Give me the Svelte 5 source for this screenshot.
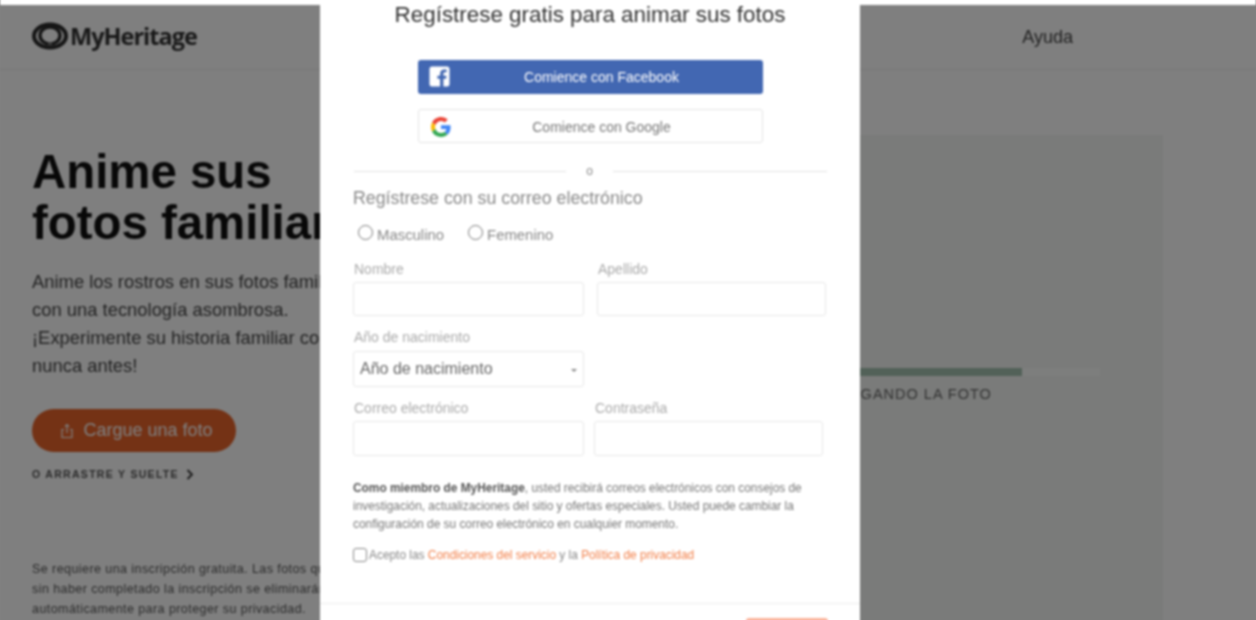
<script>
  let firstRow = [
    { label: "Nombre" },
    { label: "Apellido" }
  ];
  let lastRow = [
    { label: "Correo electrónico" },
    { label: "Contraseña" }
  ];
</script>

<div class="screen">
  <div class="canvas">
    <div class="page">
      <header class="topbar">
        <div class="logo">
          <svg width="38" height="28" viewBox="0 0 38 28" aria-hidden="true">
            <ellipse cx="19" cy="14" rx="16" ry="11.500" fill="none" stroke="#2c2c2c" stroke-width="4" />
            <ellipse cx="19" cy="13.500" rx="10" ry="8.500" fill="none" stroke="#2c2c2c" stroke-width="3.400" />
            <path d="M17 21.500h4" fill="none" stroke="#808080" stroke-width="2.500" />
          </svg>
          <span>MyHeritage</span>
        </div>
        <span class="help">Ayuda</span>
      </header>

      <main class="content">
        <section class="intro">
          <h1>Anime sus<br />fotos familiares</h1>
          <p class="lead">
            Anime los rostros en sus fotos familiares<br />
            con una tecnología asombrosa.<br />
            ¡Experimente su historia familiar como<br />
            nunca antes!
          </p>
          <button class="upload" type="button">
            <svg width="16" height="18" viewBox="0 0 16 18" aria-hidden="true">
              <path d="M5 7.500H3v8h10v-8h-2M8 11V2.500M5.800 4.600 8 2.500l2.200 2.100" fill="none" stroke="#fff" stroke-width="1.200" />
            </svg>
            Cargue una foto
          </button>
          <div class="drag">
            O ARRASTRE Y SUELTE
            <svg width="8" height="11" viewBox="0 0 8 11" aria-hidden="true">
              <path d="M1.500 1 6 5.500 1.500 10" fill="none" stroke="#333" stroke-width="1.800" />
            </svg>
          </div>
          <p class="fine">
            Se requiere una inscripción gratuita. Las fotos que<br />
            sin haber completado la inscripción se eliminarán<br />
            automáticamente para proteger su privacidad.
          </p>
        </section>

        <section class="preview">
          <div class="progress"><div class="progress-fill"></div></div>
          <div class="progress-label">CARGANDO LA FOTO</div>
        </section>
      </main>
    </div>

    <div class="overlay"></div>

    <div class="modal">
      <div class="modal-body">
        <h2>Regístrese gratis para animar sus fotos</h2>

        <button class="social fb" type="button">
          <svg class="social-icon" width="21" height="21" viewBox="0 0 21 21" aria-hidden="true">
            <path d="M3 .5h15A2.500 2.500 0 0 1 20.500 3v15a2.500 2.500 0 0 1-2.500 2.500h-3.600v-7.700h2.700l.4-3.100h-3.100V7.800c0-.9.300-1.500 1.600-1.500h1.600V3.500c-.3 0-1.300-.1-2.400-.1-2.400 0-4 1.400-4 4.100v2.200H8.400v3.100h2.700v7.700H3A2.500 2.500 0 0 1 .5 18V3A2.500 2.500 0 0 1 3 .5z" fill="#fff" />
          </svg>
          Comience con Facebook
        </button>

        <button class="social google" type="button">
          <svg class="social-icon" width="20" height="20" viewBox="0 0 48 48" aria-hidden="true">
            <path fill="#EA4335" d="M24 9.500c3.500 0 6.700 1.200 9.200 3.600l6.900-6.900C35.900 2.400 30.500 0 24 0 14.600 0 6.500 5.400 2.600 13.200l8 6.200C12.500 13.600 17.800 9.500 24 9.500z" />
            <path fill="#4285F4" d="M47 24.500c0-1.600-.1-3.100-.4-4.500H24v9h12.900c-.6 3-2.200 5.500-4.700 7.200l7.700 6c4.500-4.200 7.100-10.300 7.100-17.700z" />
            <path fill="#FBBC05" d="M10.500 28.600c-.5-1.400-.8-3-.8-4.600s.3-3.200.8-4.600l-8-6.200C.9 16.500 0 20.100 0 24s.9 7.500 2.600 10.800l7.900-6.200z" />
            <path fill="#34A853" d="M24 48c6.500 0 11.900-2.100 15.900-5.800l-7.700-6c-2.200 1.500-4.900 2.300-8.200 2.300-6.200 0-11.500-4.200-13.400-9.800l-8 6.200C6.500 42.600 14.600 48 24 48z" />
          </svg>
          Comience con Google
        </button>

        <div class="divider"><span>o</span></div>

        <h3>Regístrese con su correo electrónico</h3>

        <div class="genders">
          <label><span class="radio"></span>Masculino</label>
          <label><span class="radio"></span>Femenino</label>
        </div>

        <div class="row row-names">
          {#each firstRow as f}
            <div class="field">
              <span class="field-label">{f.label}</span>
              <div class="input"></div>
            </div>
          {/each}
        </div>

        <div class="row row-year">
          <div class="field">
            <span class="field-label">Año de nacimiento</span>
            <div class="input select">
              Año de nacimiento
              <span class="caret"></span>
            </div>
          </div>
        </div>

        <div class="row row-account">
          {#each lastRow as f}
            <div class="field">
              <span class="field-label">{f.label}</span>
              <div class="input"></div>
            </div>
          {/each}
        </div>

        <p class="terms">
          <b>Como miembro de MyHeritage</b>, usted recibirá correos electrónicos con consejos de<br />
          investigación, actualizaciones del sitio y ofertas especiales. Usted puede cambiar la<br />
          configuración de su correo electrónico en cualquier momento.
        </p>

        <div class="accept">
          <span class="check"></span>
          <span>Acepto las <a href="#terms">Condiciones del servicio</a> y la <a href="#privacy">Política de privacidad</a></span>
        </div>
      </div>

      <div class="modal-foot">
        <div class="submit"></div>
      </div>
    </div>
  </div>
</div>

<style>
  :global(body) {
    overflow: hidden;
    background: #fff;
  }

  .screen {
    width: 1256px;
    height: 620px;
    overflow: hidden;
    background: #808080;
    font-family: "Liberation Sans", Arial, sans-serif;
  }

  /* reference is a soft upscale, canvas runs past the top and bottom so the blur has no pale edge */
  .canvas {
    position: relative;
    height: 628px;
    margin-top: -4px;
    padding-top: 9px;
    box-sizing: border-box;
    background: #fff;
    filter: blur(0.8px);
  }

  .page {
    height: 619px;
    overflow: hidden;
    background: #fff;
    color: #222;
  }

  .topbar {
    height: 64px;
    border-bottom: 1px solid #ececec;
    background: #fff;
    display: flex;
    align-items: center;
    justify-content: space-between;
    padding: 0 183px 0 31px;
  }

  .logo {
    display: flex;
    align-items: center;
    gap: 1px;
  }

  .logo svg {
    margin-top: -2px;
  }

  .logo span {
    margin-top: -3px;
    font-family: "Open Sans", sans-serif;
    font-weight: 700;
    font-size: 23.500px;
    letter-spacing: -1px;
    color: #333;
  }

  .help {
    font-size: 18px;
    color: #444;
  }

  .content {
    display: flex;
    padding-top: 65px;
  }

  .intro {
    width: 828px;
    padding-left: 32px;
    box-sizing: border-box;
    flex: none;
  }

  h1 {
    margin: 0;
    padding-top: 11px;
    font-size: 47.400px;
    line-height: 51px;
    font-weight: 700;
    color: #111;
    white-space: nowrap;
  }

  .lead {
    margin: 20px 0 0;
    font-size: 18.400px;
    line-height: 28px;
    color: #444;
    white-space: nowrap;
  }

  .upload {
    display: flex;
    align-items: center;
    justify-content: center;
    gap: 8px;
    margin-top: 29px;
    width: 204px;
    height: 43px;
    padding: 0 0 0 4px;
    border: 0;
    border-radius: 22px;
    background: #e8642a;
    color: #fff;
    font-family: inherit;
    font-size: 18px;
  }

  .drag {
    display: flex;
    align-items: center;
    gap: 7px;
    margin-top: 16px;
    font-size: 10.500px;
    font-weight: 700;
    letter-spacing: 1.300px;
    color: #555;
  }

  .fine {
    margin: 79px 0 0;
    font-size: 12.500px;
    line-height: 20px;
    letter-spacing: .43px;
    color: #555;
    white-space: nowrap;
  }

  .preview {
    width: 335px;
    height: 490px;
    flex: none;
    background: #f4f7f4;
    padding: 233px 63px 0 1px;
    box-sizing: border-box;
  }

  .progress {
    height: 8px;
    background: #fbfcfb;
  }

  .progress-fill {
    width: 71.200%;
    height: 100%;
    background: #a5c2b0;
  }

  .progress-label {
    margin: 9px 0 0 -2px;
    font-size: 14.500px;
    line-height: 18px;
    letter-spacing: 1px;
    color: #666;
  }

  .overlay {
    position: absolute;
    inset: 9px 0 0 0;
    background: rgba(0, 0, 0, .5);
  }

  .modal {
    position: absolute;
    left: 320px;
    top: 4px;
    width: 540px;
    height: 624px;
    background: #fff;
    overflow: hidden;
  }

  .modal-body {
    height: 604px;
    box-sizing: border-box;
    padding: 3px 33px 0;
    border-bottom: 1px solid #ececec;
  }

  h2 {
    margin: 0;
    font-size: 22.400px;
    line-height: 24px;
    font-weight: 400;
    color: #333;
    text-align: center;
  }

  .social {
    position: relative;
    display: block;
    width: 345px;
    margin: 0 0 0 65px;
    border-radius: 3px;
    font-family: inherit;
    font-size: 14px;
    text-align: center;
    padding: 0 0 0 22px;
    box-sizing: border-box;
  }

  .social-icon {
    position: absolute;
    left: 11px;
    top: 6px;
  }

  .fb {
    height: 34px;
    margin-top: 33px;
    border: 0;
    background: #4267b2;
    color: #fff;
  }

  .google {
    height: 34px;
    margin-top: 15px;
    padding-top: 2px;
    border: 1px solid #e4e4e4;
    background: #fff;
    color: #777;
  }

  .google .social-icon {
    left: 12px;
    top: 7px;
  }

  .divider {
    position: relative;
    margin: 19px 0 0 1px;
    width: 473px;
    height: 18px;
    display: flex;
    align-items: center;
    justify-content: space-between;
  }

  .divider::before {
    content: "";
    width: 212px;
    height: 1px;
    background: #e2e2e2;
  }

  .divider::after {
    content: "";
    width: 214px;
    height: 1px;
    background: #e2e2e2;
  }

  .divider span {
    font-size: 12px;
    color: #888;
  }

  h3 {
    margin: 8px 0 0;
    font-size: 17.800px;
    line-height: 20px;
    font-weight: 400;
    color: #888;
  }

  .genders {
    display: flex;
    gap: 24px;
    margin: 17px 0 0 5px;
    height: 20px;
  }

  .genders label {
    display: flex;
    align-items: center;
    font-size: 14.900px;
    color: #888;
  }

  .radio {
    width: 13px;
    height: 13px;
    border: 1px solid #777;
    border-radius: 50%;
    margin-right: 4px;
    position: relative;
    top: -3px;
  }

  .row {
    display: grid;
    grid-template-columns: 231px 229px;
  }

  .row-names {
    column-gap: 13px;
    margin-top: 16px;
  }

  .row-year {
    margin-top: 13px;
  }

  .row-account {
    column-gap: 10px;
    margin-top: 13px;
  }

  .field-label {
    display: block;
    font-size: 14px;
    line-height: 16px;
    padding-left: 1px;
    color: #aaa;
    white-space: nowrap;
  }

  .input {
    height: 34px;
    margin-top: 5px;
    border: 1px solid #e8e8e8;
    border-radius: 3px;
    box-sizing: border-box;
  }

  .row-account .input {
    height: 35px;
  }

  .select {
    position: relative;
    height: 36px;
    margin-top: 6px;
    display: flex;
    align-items: center;
    padding-left: 6px;
    font-size: 16px;
    color: #666;
  }

  .caret {
    position: absolute;
    right: 6px;
    top: 17px;
    border: 3px solid transparent;
    border-top: 3px solid #888;
    border-bottom: 0;
  }

  .terms {
    margin: 23px 0 0;
    font-size: 11.900px;
    line-height: 18px;
    color: #777;
    white-space: nowrap;
  }

  .terms b {
    color: #555;
  }

  .accept {
    display: flex;
    align-items: center;
    gap: 2px;
    margin-top: 15px;
    font-size: 11.900px;
    color: #888;
  }

  .check {
    width: 14px;
    height: 14px;
    border: 1px solid #888;
    border-radius: 3px;
    box-sizing: border-box;
  }

  .accept a {
    color: #f2804a;
    text-decoration: none;
  }

  .modal-foot {
    padding: 14px 32px 0 0;
    display: flex;
    justify-content: flex-end;
  }

  .submit {
    width: 82px;
    height: 34px;
    border-radius: 3px;
    background: #fbb49c;
  }
</style>
